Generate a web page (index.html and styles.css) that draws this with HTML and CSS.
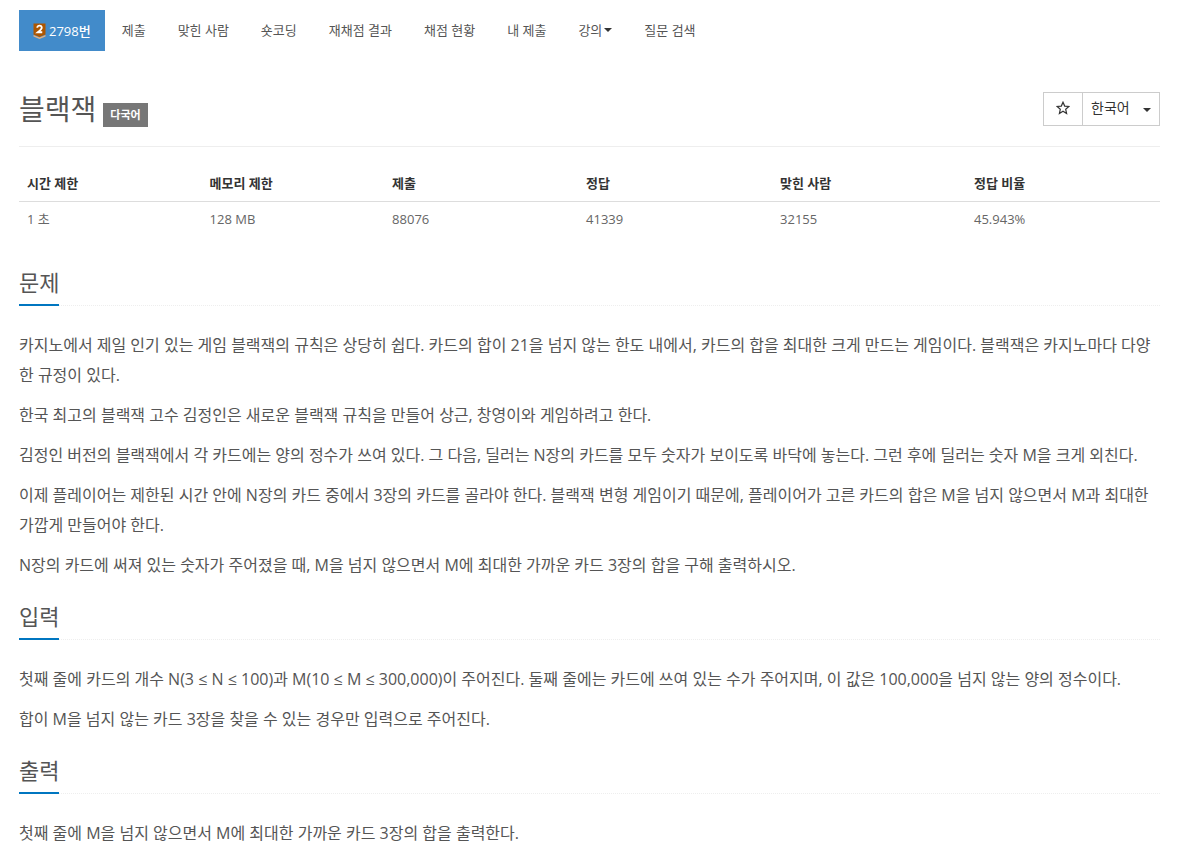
FILE: index.html
```html
<!DOCTYPE html>
<html lang="ko">
<head>
<meta charset="utf-8">
<meta name="viewport" content="width=device-width, initial-scale=1">
<title>2798번: 블랙잭</title>
<link rel="stylesheet" href="styles.css">
</head>
<body>
<div class="container">
  <nav class="problem-menu">
    <a class="tab active" href="#"><svg class="tier" viewBox="0 0 26 32" aria-hidden="true"><path d="M1 1h24v22l-12 5-12-5z" fill="#ad5600"/><path d="M1 24l12 5 12-5v3l-12 5-12-5z" fill="#e8b07c"/><path d="M8.500 9.500c0-5.500 9-5.500 9 0 0 3-3 5-8 9h9" fill="none" stroke="#fff" stroke-width="3.600"/></svg>2798번</a>
    <a class="tab" href="#">제출</a>
    <a class="tab" href="#">맞힌 사람</a>
    <a class="tab" href="#">숏코딩</a>
    <a class="tab" href="#">재채점 결과</a>
    <a class="tab" href="#">채점 현황</a>
    <a class="tab" href="#">내 제출</a>
    <a class="tab" href="#">강의<svg class="caret" viewBox="0 0 8 4" aria-hidden="true"><path d="M0 0h8L4 4z"/></svg></a>
    <a class="tab" href="#">질문 검색</a>
  </nav>

  <header class="title-bar">
    <h1 class="title">블랙잭</h1>
    <span class="label">다국어</span>
    <div class="tools">
      <button class="favorite" type="button" aria-label="즐겨찾기"><svg class="star" viewBox="0 0 14 14" aria-hidden="true"><path d="M7 1.200l1.700 3.900 4.200.4-3.200 2.800.9 4.200L7 10.300l-3.600 2.200.9-4.200L1.100 5.500l4.200-.4z"/></svg></button>
      <div class="language">
        <select class="language-select" aria-label="언어"><option>한국어</option></select>
        <svg class="caret language-caret" viewBox="0 0 8 4" aria-hidden="true"><path d="M0 0h8L4 4z"/></svg>
      </div>
    </div>
  </header>

  <table class="info">
    <thead><tr><th class="limit">시간 제한</th><th class="limit">메모리 제한</th><th>제출</th><th>정답</th><th>맞힌 사람</th><th>정답 비율</th></tr></thead>
    <tbody><tr><td>1 초</td><td>128 MB</td><td>88076</td><td>41339</td><td>32155</td><td>45.943%</td></tr></tbody>
  </table>

  <section class="section">
    <div class="headline"><h2>문제</h2></div>
    <p>카지노에서 제일 인기 있는 게임 블랙잭의 규칙은 상당히 쉽다. 카드의 합이 21을 넘지 않는 한도 내에서, 카드의 합을 최대한 크게 만드는 게임이다. 블랙잭은 카지노마다 다양한 규정이 있다.</p>
    <p>한국 최고의 블랙잭 고수 김정인은 새로운 블랙잭 규칙을 만들어 상근, 창영이와 게임하려고 한다.</p>
    <p>김정인 버전의 블랙잭에서 각 카드에는 양의 정수가 쓰여 있다. 그 다음, 딜러는 N장의 카드를 모두 숫자가 보이도록 바닥에 놓는다. 그런 후에 딜러는 숫자 M을 크게 외친다.</p>
    <p>이제 플레이어는 제한된 시간 안에 N장의 카드 중에서 3장의 카드를 골라야 한다. 블랙잭 변형 게임이기 때문에, 플레이어가 고른 카드의 합은 M을 넘지 않으면서 M과 최대한 가깝게 만들어야 한다.</p>
    <p>N장의 카드에 써져 있는 숫자가 주어졌을 때, M을 넘지 않으면서 M에 최대한 가까운 카드 3장의 합을 구해 출력하시오.</p>
  </section>
  <section class="section">
    <div class="headline"><h2>입력</h2></div>
    <p>첫째 줄에 카드의 개수 N(3 ≤ N ≤ 100)과 M(10 ≤ M ≤ 300,000)이 주어진다. 둘째 줄에는 카드에 쓰여 있는 수가 주어지며, 이 값은 100,000을 넘지 않는 양의 정수이다.</p>
    <p>합이 M을 넘지 않는 카드 3장을 찾을 수 있는 경우만 입력으로 주어진다.</p>
  </section>
  <section class="section">
    <div class="headline"><h2>출력</h2></div>
    <p>첫째 줄에 M을 넘지 않으면서 M에 최대한 가까운 카드 3장의 합을 출력한다.</p>
  </section>
</div>
</body>
</html>
```
FILE: styles.css
```css
* { box-sizing: border-box; }
body {
  margin: 0;
  background: #fff;
  color: #555;
  font-family: "Open Sans", "Noto Sans CJK KR", sans-serif;
  font-size: 13px;
  line-height: 20px;
}
.container { padding: 10px 19px 8px; }

.problem-menu { display: flex; flex-wrap: wrap; gap: 2px; }
.tab {
  display: flex;
  align-items: center;
  height: 41px;
  padding: 0 15px 2px;
  color: #555;
  text-decoration: none;
}
.tab.active { background: #428bca; color: #fff; font-weight: 500; padding: 0 14px; }
.tier { width: 13px; height: 16px; margin-right: 3px; }
.caret { width: 8px; height: 4px; margin-left: 2px; fill: #333; }

.title-bar {
  display: flex;
  align-items: center;
  height: 76px;
  margin-top: 20px;
  border-bottom: 1px solid #eee;
}
.title { margin: 0; font-size: 28px; font-weight: 400; line-height: 40px; }
.label {
  margin: 12px 0 0 7px;
  padding: 2px 7px;
  background: #777;
  color: #fff;
  font-size: 11px;
  font-weight: 700;
}
.tools { display: flex; height: 34px; margin-left: auto; }
.favorite {
  display: flex;
  align-items: center;
  justify-content: center;
  width: 40px;
  padding: 0 0 2px;
  border: 1px solid #ccc;
  background: #fff;
}
.star { width: 14px; height: 14px; fill: none; stroke: #333; stroke-width: 1.2; }
.language { position: relative; display: flex; margin-left: -1px; }
.language-select {
  width: 78px;
  padding: 0 8px 2px;
  appearance: none;
  border: 1px solid #ccc;
  border-radius: 0;
  background: #fff;
  color: #333;
  font: inherit;
  font-size: 14px;
}
.language-caret { position: absolute; top: 16px; right: 9px; pointer-events: none; }

.info { width: 100%; margin-top: 19px; border-collapse: collapse; table-layout: fixed; }
.info th, .info td { width: 17%; padding: 7px 8px; text-align: left; }
.info .limit { width: 16%; }
.info th { padding-bottom: 8px; border-bottom: 1px solid #ddd; color: #333; font-weight: 700; }
.info td { color: #666; }

.section { padding-top: 19px; }
.info + .section { padding-top: 29px; }
.headline { display: flex; margin-bottom: 24px; border-bottom: 1px dotted #eee; }
.headline h2 {
  margin: 0 0 -1px;
  padding-bottom: 5px;
  border-bottom: 2px solid #0076c0;
  font-size: 22px;
  font-weight: 400;
  line-height: 34px;
}
.section p { margin: 0; font-size: 16px; line-height: 30px; }
.section p + p { margin-top: 10px; }
```
